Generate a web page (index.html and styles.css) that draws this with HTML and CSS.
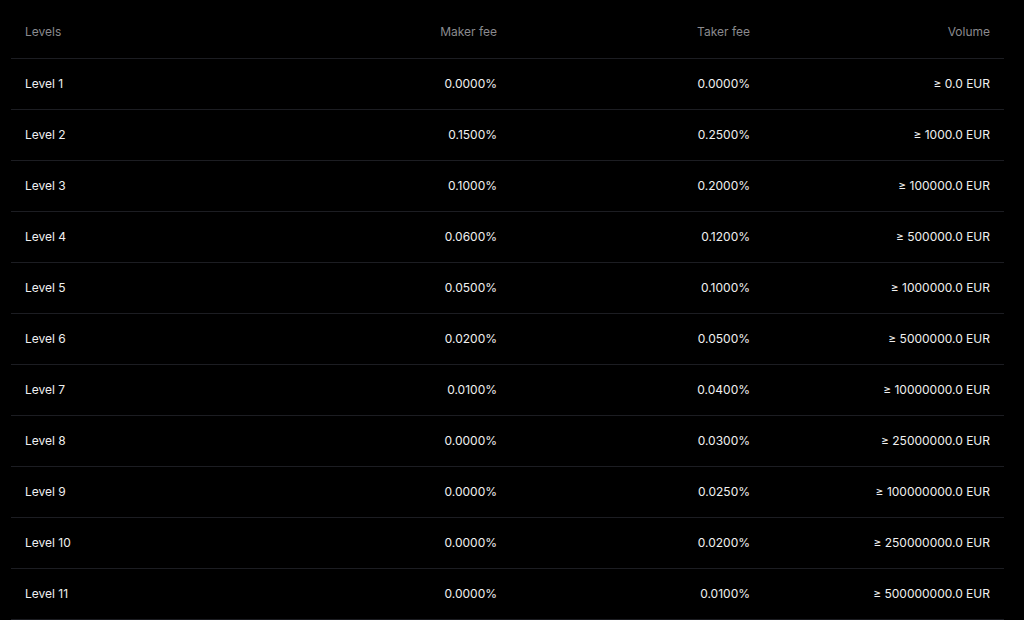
FILE: index.html
```html
<!DOCTYPE html>
<html>
<head>
<meta charset="utf-8">
<link rel="stylesheet" href="styles.css">
</head>
<body>
<div class="fees">
  <div class="row head">
    <div class="cell">Levels</div>
    <div class="cell num">Maker fee</div>
    <div class="cell num">Taker fee</div>
    <div class="cell num">Volume</div>
  </div>
  <div class="row"><div class="cell">Level 1</div><div class="cell num">0.0000%</div><div class="cell num">0.0000%</div><div class="cell num">≥ 0.0 EUR</div></div>
  <div class="row"><div class="cell">Level 2</div><div class="cell num">0.1500%</div><div class="cell num">0.2500%</div><div class="cell num">≥ 1000.0 EUR</div></div>
  <div class="row"><div class="cell">Level 3</div><div class="cell num">0.1000%</div><div class="cell num">0.2000%</div><div class="cell num">≥ 100000.0 EUR</div></div>
  <div class="row"><div class="cell">Level 4</div><div class="cell num">0.0600%</div><div class="cell num">0.1200%</div><div class="cell num">≥ 500000.0 EUR</div></div>
  <div class="row"><div class="cell">Level 5</div><div class="cell num">0.0500%</div><div class="cell num">0.1000%</div><div class="cell num">≥ 1000000.0 EUR</div></div>
  <div class="row"><div class="cell">Level 6</div><div class="cell num">0.0200%</div><div class="cell num">0.0500%</div><div class="cell num">≥ 5000000.0 EUR</div></div>
  <div class="row"><div class="cell">Level 7</div><div class="cell num">0.0100%</div><div class="cell num">0.0400%</div><div class="cell num">≥ 10000000.0 EUR</div></div>
  <div class="row"><div class="cell">Level 8</div><div class="cell num">0.0000%</div><div class="cell num">0.0300%</div><div class="cell num">≥ 25000000.0 EUR</div></div>
  <div class="row"><div class="cell">Level 9</div><div class="cell num">0.0000%</div><div class="cell num">0.0250%</div><div class="cell num">≥ 100000000.0 EUR</div></div>
  <div class="row"><div class="cell">Level 10</div><div class="cell num">0.0000%</div><div class="cell num">0.0200%</div><div class="cell num">≥ 250000000.0 EUR</div></div>
  <div class="row"><div class="cell">Level 11</div><div class="cell num">0.0000%</div><div class="cell num">0.0100%</div><div class="cell num">≥ 500000000.0 EUR</div></div>
</div>
</body>
</html>
```
FILE: styles.css
```css
html, body {
  margin: 0;
  background: #000;
  height: 100%;
  overflow: hidden;
}
body {
  font-family: Inter, "Liberation Sans", sans-serif;
  font-size: 12px;
  color: #f0f0f0;
  padding: 8px 20px 0 11px;
}
.fees {
  width: 993px;
}
.row {
  display: grid;
  grid-template-columns: 247px 253px 253px 240px;
  height: 50px;
  border-bottom: 1px solid #1c1d22;
  align-items: center;
}
.cell {
  padding: 0 14px;
  white-space: nowrap;
  transform: translateY(-1px);
}
.num {
  text-align: right;
}
.head .cell {
  color: #8a8a8e;
  transform: translateY(-2px);
}
```
